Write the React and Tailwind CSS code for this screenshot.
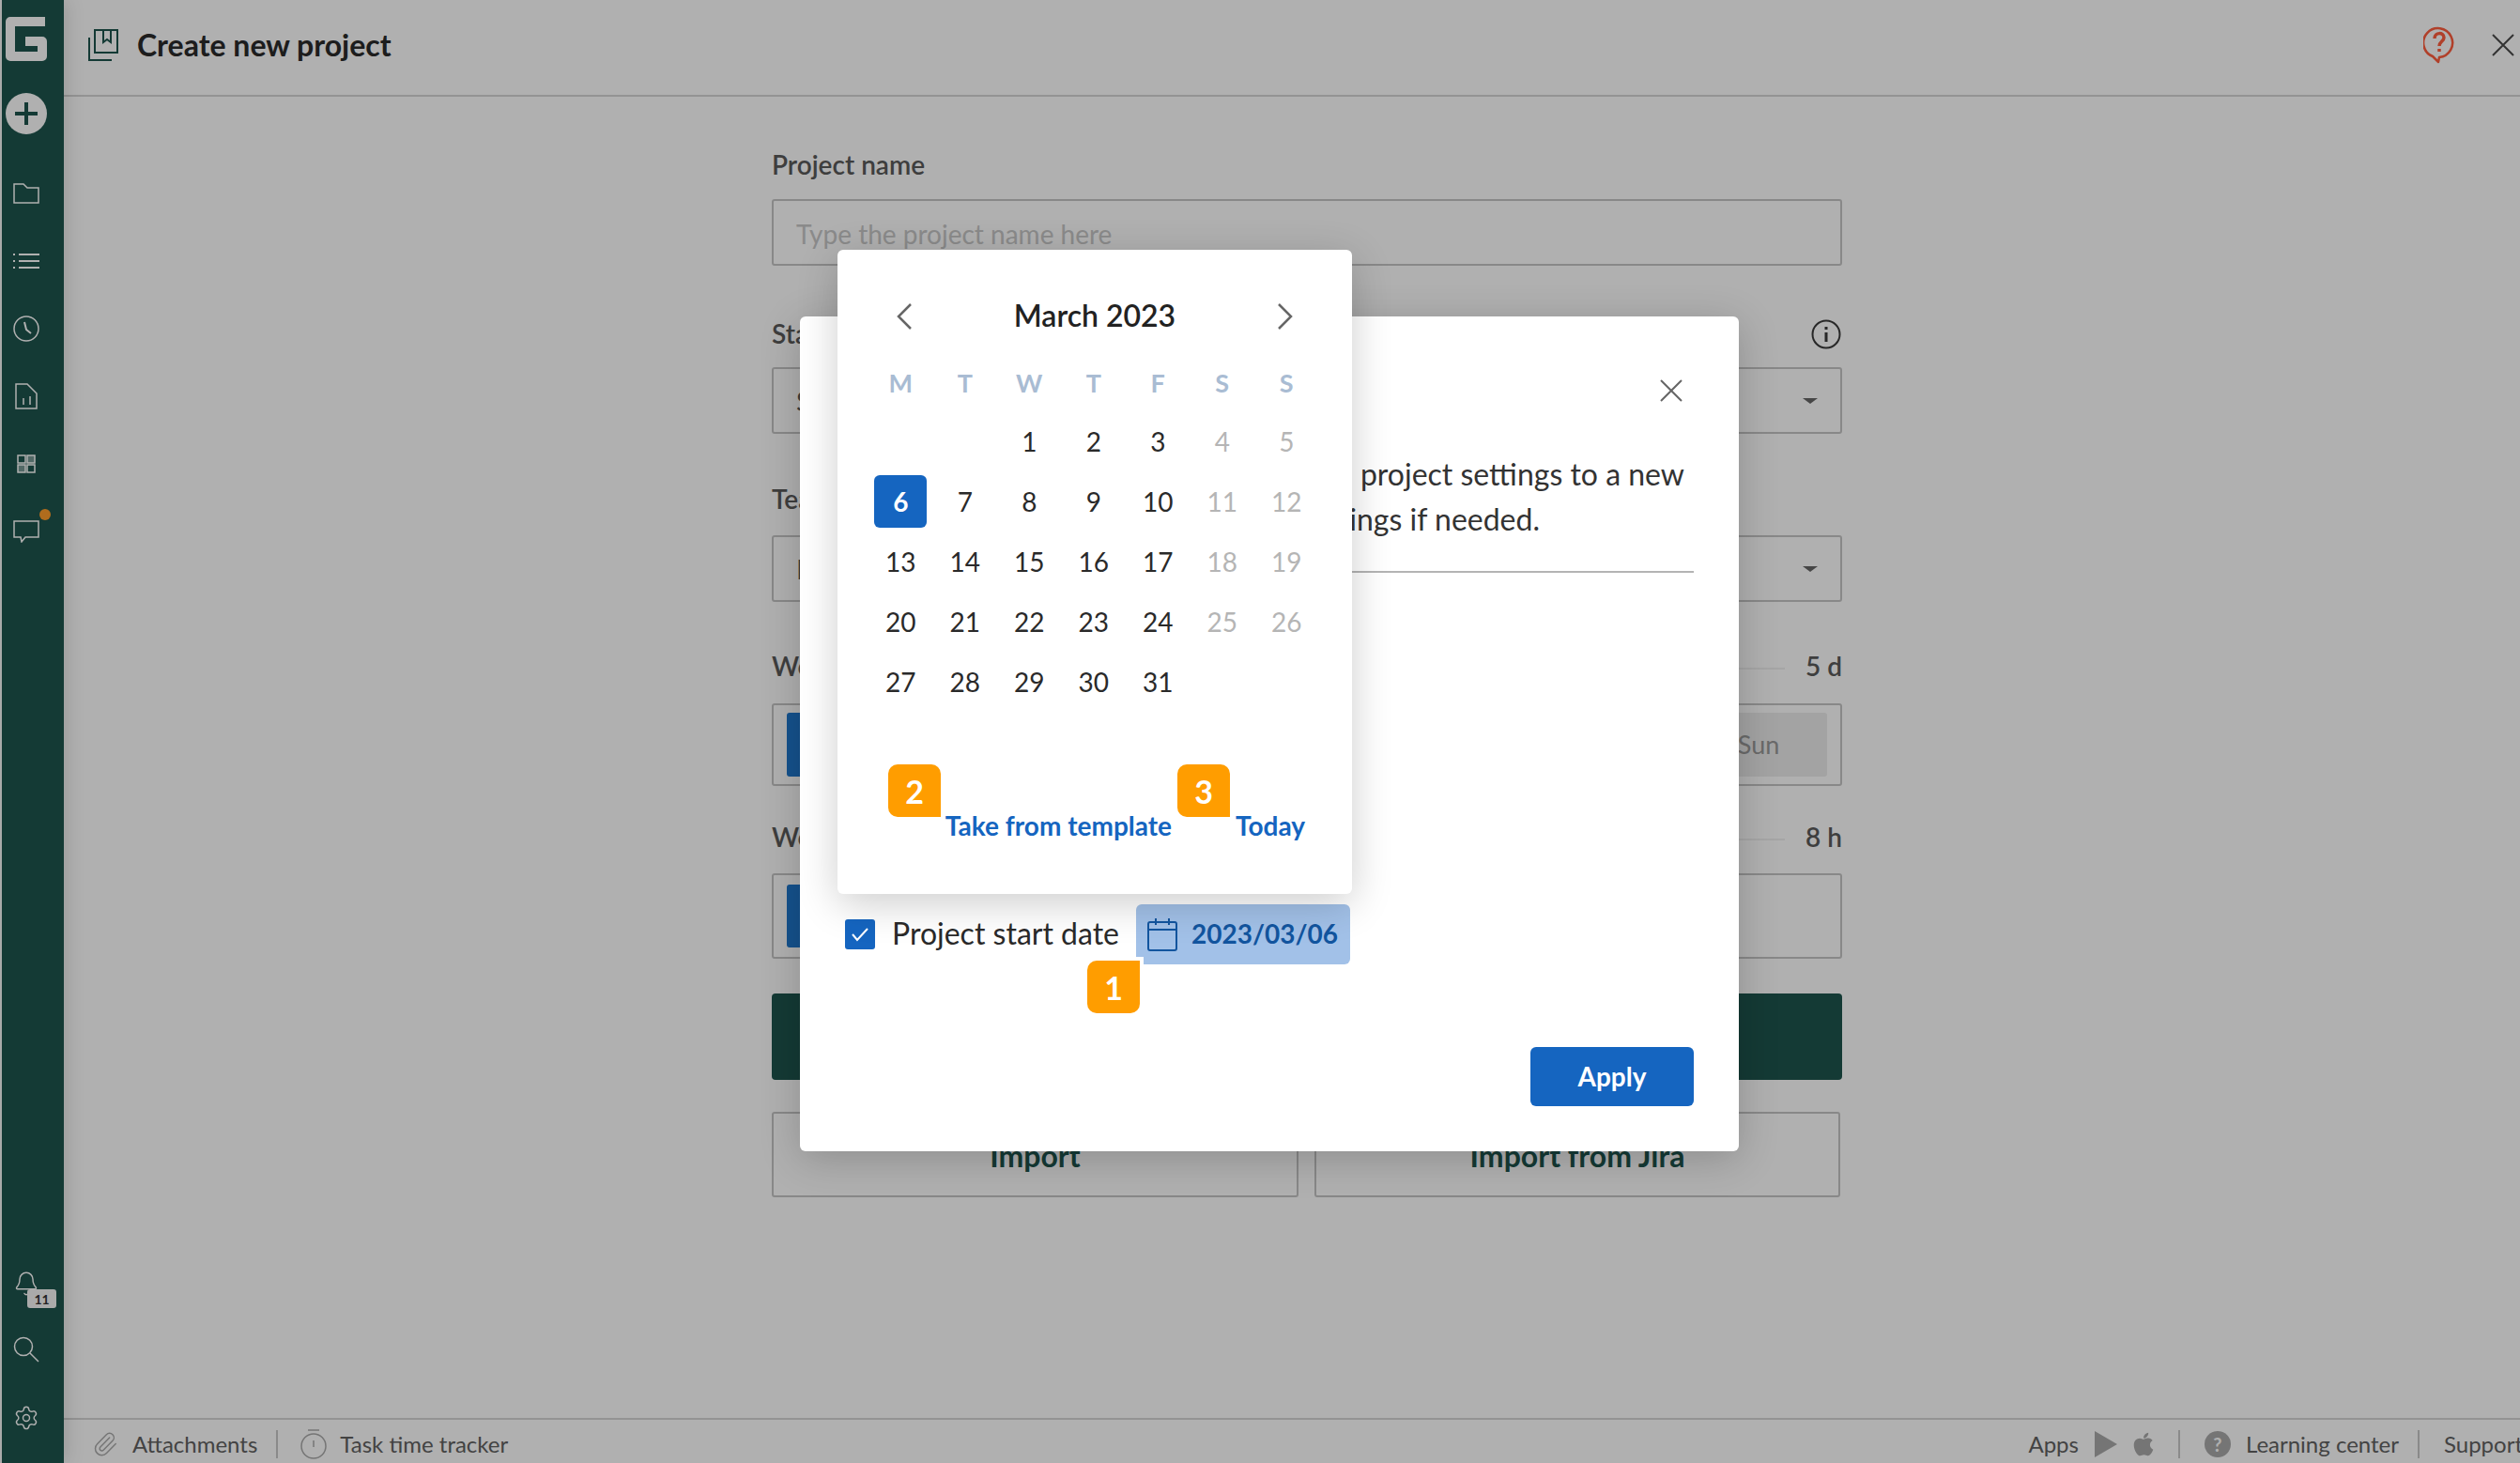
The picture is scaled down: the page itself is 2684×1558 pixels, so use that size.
import { Bell, Settings, Paperclip } from "lucide-react";
import { FaApple } from "react-icons/fa";

const WEEKDAYS = ["M", "T", "W", "T", "F", "S", "S"];
// null = empty cell before the 1st
const DAYS = [null, null, 1, 2, 3, 4, 5, 6, 7, 8, 9, 10, 11, 12, 13, 14, 15, 16, 17, 18, 19, 20, 21, 22, 23, 24, 25, 26, 27, 28, 29, 30, 31];

function Badge({ n, className }) {
  return (
    <div className={`absolute flex h-[56px] w-[56px] items-center justify-center bg-[#ff9d00] text-[34px] font-bold text-white ${className}`}>
      {n}
    </div>
  );
}

function SideIcon({ children }) {
  return <div className="relative flex h-[28px] w-[28px] items-center justify-center text-white">{children}</div>;
}

function Sidebar() {
  return (
    <aside className="z-10 ml-[2px] flex w-[66px] shrink-0 flex-col items-center bg-[#1d544d] pt-[18px] pb-[34px] pr-[14px] shadow-[4px_0_18px_rgba(0,0,0,0.12)]">
      <svg width="44" height="47" viewBox="0 0 44 47" fill="none" stroke="white" strokeWidth="10" strokeLinejoin="round" className="shrink-0">
        <path d="M42 5 H5 V42 H39 V26 H21" />
      </svg>
      <div className="mt-[34px] flex h-[44px] w-[44px] items-center justify-center rounded-full bg-white">
        <svg width="26" height="26" viewBox="0 0 26 26" stroke="#1d544d" strokeWidth="4"><path d="M13 1v24M1 13h24" /></svg>
      </div>
      <div className="mt-[49px] flex flex-col gap-[44px]">
        <SideIcon>
          <svg width="28" height="24" viewBox="0 0 28 24" fill="none" stroke="currentColor" strokeWidth="1.5">
            <path d="M1 2h10l4 4h12v16H1z" />
          </svg>
        </SideIcon>
        <SideIcon>
          <svg width="28" height="18" viewBox="0 0 28 18" stroke="currentColor" strokeWidth="2">
            <path d="M0 2h2M0 9h2M0 16h2M6 2h22M6 9h22M6 16h22" />
          </svg>
        </SideIcon>
        <SideIcon>
          <svg width="28" height="28" viewBox="0 0 28 28" fill="none" stroke="currentColor" strokeWidth="1.5">
            <circle cx="14" cy="14" r="13" />
            <path d="M12 7l2 8 5 4" strokeWidth="2" />
          </svg>
        </SideIcon>
        <SideIcon>
          <svg width="24" height="28" viewBox="0 0 24 28" fill="none" stroke="currentColor" strokeWidth="1.5">
            <path d="M1 1h12l10 10v16H1z" />
            <path d="M9 16v7M16 14v9" />
          </svg>
        </SideIcon>
        <SideIcon>
          <svg width="20" height="20" viewBox="0 0 20 20" fill="none" stroke="currentColor" strokeWidth="1.5">
            <rect x="1" y="1" width="8" height="8" />
            <rect x="11" y="1" width="8" height="8" fill="currentColor" fillOpacity="0.4" />
            <rect x="1" y="11" width="8" height="8" fill="currentColor" fillOpacity="0.4" />
            <rect x="11" y="11" width="8" height="8" />
          </svg>
        </SideIcon>
        <SideIcon>
          <svg width="28" height="24" viewBox="0 0 28 24" fill="none" stroke="currentColor" strokeWidth="1.5">
            <path d="M1 1h26v17H13l-4 5-1-5H1z" />
          </svg>
          <span className="absolute left-[28px] top-[-10px] h-[12px] w-[12px] rounded-full bg-[#ff9d2b]" />
        </SideIcon>
      </div>
      <div className="mt-auto flex flex-col gap-[45px]">
        <SideIcon>
          <Bell size={28} strokeWidth={1.25} className="mt-[6px]" />
          <span className="absolute left-[15px] top-[23px] flex h-[20px] w-[31px] items-center justify-center rounded-[3px] bg-[#f6f6f6] text-[14px] font-bold text-[#333]">11</span>
        </SideIcon>
        <SideIcon>
          <svg width="28" height="28" viewBox="0 0 28 28" fill="none" stroke="currentColor" strokeWidth="1.5">
            <circle cx="11" cy="11" r="9.5" />
            <path d="M18 18l9 9" />
          </svg>
        </SideIcon>
        <SideIcon>
          <Settings size={30} strokeWidth={1.25} />
        </SideIcon>
      </div>
    </aside>
  );
}

function Field({ label, text, className }) {
  return (
    <div>
      <div className="flex h-[38px] items-center text-[28px] font-semibold text-[#5a5a5a]">{label}</div>
      <div className={`flex h-[71px] items-center justify-between rounded-[3px] border-2 border-[#c6c6c6] pl-[24px] pr-[24px] text-[29px] text-[#555] ${className}`}>
        <span>{text}</span>
        <span className="h-0 w-0 border-x-[8px] border-t-[6px] border-x-transparent border-t-[#666]" />
      </div>
    </div>
  );
}

function Form() {
  return (
    <div className="ml-[754px] w-[1140px]">
      <div className="box-content flex h-[38px] items-center pt-[53px] text-[28px] font-semibold text-[#5a5a5a]">Project name</div>
      <div className="mt-[18px] flex h-[71px] items-center rounded-[3px] border-2 border-[#c6c6c6] pl-[24px] pt-[2px] text-[28px] text-[#c8c8c8]">
        Type the project name here
      </div>
      <div className="relative mt-[53px]">
        <Field label="Start" text="Standard" className="mt-[17px]" />
        <svg className="absolute right-[1px] top-[4px]" width="32" height="32" viewBox="0 0 32 32" fill="none" stroke="#3a3a3a" strokeWidth="2">
          <circle cx="16" cy="16" r="14.5" />
          <path d="M16 14v10M16 8v3" strokeWidth="3" />
        </svg>
      </div>
      <div className="mt-[50px]">
        <Field label="Team" text="None" className="mt-[20px]" />
      </div>
      <div className="mt-[49px] flex h-[38px] items-center justify-between text-[28px] font-semibold text-[#5a5a5a]">
        <span>Work days</span>
        <span className="ml-auto mr-[22px] mt-[6px] h-[2px] w-[300px] bg-[#f0f0f0]" />
        <span>5 d</span>
      </div>
      <div className="mt-[21px] flex h-[88px] items-center justify-between rounded-[3px] border-2 border-[#c6c6c6] px-[14px]">
        <span className="h-[68px] w-[100px] rounded-[3px] bg-[#1f77cc]" />
        <span className="flex h-[68px] w-[146px] items-center justify-center rounded-[3px] bg-[#ececec] text-[27px] text-[#9a9a9a]">Sun</span>
      </div>
      <div className="mt-[35px] flex h-[38px] items-center justify-between text-[28px] font-semibold text-[#5a5a5a]">
        <span>Work hours</span>
        <span className="ml-auto mr-[22px] mt-[6px] h-[2px] w-[300px] bg-[#f0f0f0]" />
        <span>8 h</span>
      </div>
      <div className="mt-[20px] flex h-[91px] items-center rounded-[3px] border-2 border-[#c6c6c6] px-[14px]">
        <span className="h-[67px] w-[100px] rounded-[3px] bg-[#1f77cc]" />
      </div>
      <div className="mt-[37px] h-[92px] rounded-[4px] bg-[#1d544d]" />
      <div className="mt-[34px] flex gap-[17px] pr-[2px]">
        <div className="flex h-[91px] w-[561px] items-center justify-center rounded-[3px] border-2 border-[#c6c6c6] pt-[2px] text-[32px] font-bold text-[#1d544d]">Import</div>
        <div className="flex h-[91px] flex-1 items-center justify-center rounded-[3px] border-2 border-[#c6c6c6] pt-[2px] text-[32px] font-bold text-[#1d544d]">Import from Jira</div>
      </div>
    </div>
  );
}

function Calendar() {
  return (
    <div className="absolute left-[40px] top-[-71px] h-[686px] w-[548px] rounded-[6px] bg-white pt-[40px] shadow-[0_10px_44px_rgba(0,0,0,0.2)]">
      <div className="flex h-[60px] items-center justify-between px-[63px]">
        <svg width="16" height="28" viewBox="0 0 16 28" fill="none" stroke="#666" strokeWidth="2.5" className="mt-[2px]"><path d="M15 1L2 14l13 13" /></svg>
        <span className="text-[32px] font-semibold text-[#222]">March 2023</span>
        <svg width="16" height="28" viewBox="0 0 16 28" fill="none" stroke="#666" strokeWidth="2.5" className="mt-[2px]"><path d="M1 1l13 13L1 27" /></svg>
      </div>
      <div className="mt-[12px] grid grid-cols-[repeat(7,68.5px)] px-[33px]">
        {WEEKDAYS.map((d, i) => (
          <div key={i} className="flex h-[60px] items-center justify-center text-[27px] font-bold text-[#a9bcd3]">{d}</div>
        ))}
        {DAYS.map((d, i) => {
          const weekend = i % 7 >= 5;
          return (
            <div key={i} className="flex h-[64px] items-center justify-center">
              {d === 6 ? (
                <span className="flex h-[56px] w-[56px] items-center justify-center rounded-[6px] bg-[#1565c0] text-[28px] font-bold text-white">6</span>
              ) : (
                <span className={`text-[28px] ${weekend ? "text-[#b5b5b5]" : "text-[#2a2a2a]"}`}>{d}</span>
              )}
            </div>
          );
        })}
      </div>
      <div className="mt-[101px] flex h-[40px] items-center justify-end gap-[68px] pr-[50px] text-[28px] font-bold text-[#1565c0]">
        <span>Take from template</span>
        <span>Today</span>
      </div>
      <Badge n="2" className="left-[54px] top-[548px] rounded-[10px] rounded-br-none" />
      <Badge n="3" className="left-[362px] top-[548px] rounded-[10px] rounded-br-none" />
    </div>
  );
}

function Dialog() {
  return (
    <div className="absolute left-[852px] top-[337px] z-30 h-[889px] w-[1000px] rounded-[6px] bg-white px-[48px] pt-[67px] shadow-[0_8px_44px_rgba(0,0,0,0.2)]">
      <div className="flex justify-end pr-[12px]">
        <svg width="24" height="24" viewBox="0 0 24 24" stroke="#666" strokeWidth="2"><path d="M1 1l22 22M23 1L1 23" /></svg>
      </div>
      <div className="mt-[53px] text-[32px] leading-[48px] text-[#333]">
        <p className="pr-[10px] text-right">project settings to a new</p>
        <p className="pr-[164px] text-right">settings if needed.</p>
      </div>
      <div className="mt-[31px] h-[2px] bg-[#b4b4b4]" />
      <div className="relative mt-[353px] flex h-[64px] items-center">
        <span className="flex h-[32px] w-[32px] items-center justify-center rounded-[3px] bg-[#1565c0]">
          <svg width="20" height="16" viewBox="0 0 20 16" fill="none" stroke="white" strokeWidth="2"><path d="M2 8l5 6L18 2" /></svg>
        </span>
        <span className="ml-[18px] w-[260px] pb-[2px] text-[32px] text-[#2a2a2a]">Project start date</span>
        <div className="flex h-[64px] w-[228px] items-center rounded-[6px] bg-[#a2c1e8] pl-[12px] text-[#12559f]">
          <svg width="32" height="36" viewBox="0 0 32 36" fill="none" stroke="currentColor" strokeWidth="2">
            <rect x="1" y="5" width="30" height="30" rx="2" />
            <path d="M1 13h30M9 1v7M23 1v7" />
          </svg>
          <span className="ml-[15px] pb-[2px] text-[28px] font-bold">2023/03/06</span>
        </div>
        <Badge n="1" className="left-[258px] top-[60px] rounded-[10px] rounded-tr-none shadow-[4px_-4px_0_white]" />
      </div>
      <div className="mt-[88px] flex justify-end">
        <div className="flex h-[63px] w-[174px] items-center justify-center rounded-[6px] bg-[#1565c0] pb-[2px] text-[28px] font-bold text-white">Apply</div>
      </div>
      <Calendar />
    </div>
  );
}

export default function App() {
  return (
    <div className="relative flex h-[1558px] w-[2684px] overflow-hidden bg-white font-['Lato',sans-serif]">
      <Sidebar />
      <main className="flex flex-1 flex-col">
        <header className="flex h-[103px] shrink-0 items-center border-b-2 border-[#d5d5d5] pb-[5px] pl-[26px] pr-[6px]">
          <svg width="32" height="34" viewBox="0 0 32 34" fill="none" stroke="#1d544d" strokeWidth="2">
            <path d="M7 1h24v24H7z" />
            <path d="M1 9v24h24" />
            <path d="M16 1v13l4-3 4 3V1" />
          </svg>
          <h1 className="ml-[20px] text-[32px] font-bold text-[#2a2a2a]">Create new project</h1>
          <div className="ml-auto flex items-center gap-[39px]">
            <svg width="34" height="40" viewBox="0 0 34 40" fill="none" stroke="#ff5d3d" strokeWidth="2.5">
              <path d="M17 33l-1 5-6-6A15.5 15.5 0 1 1 17 33z" strokeLinejoin="round" />
              <path d="M12 13c0-7 10-7 10-1 0 4-5 4-5 9M17 24v3" strokeWidth="3.5" />
            </svg>
            <svg width="24" height="24" viewBox="0 0 24 24" stroke="#4a4a4a" strokeWidth="2"><path d="M1 1l22 22M23 1L1 23" /></svg>
          </div>
        </header>
        <div className="flex-1">
          <Form />
        </div>
        <footer className="flex h-[48px] shrink-0 items-center border-t-2 border-[#d5d5d5] pl-[30px] pt-[6px] text-[24px] text-[#626262]">
          <Paperclip size={28} strokeWidth={1.25} className="text-[#aaa]" />
          <span className="ml-[15px]">Attachments</span>
          <span className="mx-[20px] h-[30px] w-[2px] bg-[#c8c8c8]" />
          <svg className="ml-[4px]" width="28" height="32" viewBox="0 0 28 32" fill="none" stroke="#aaa" strokeWidth="1.5">
            <circle cx="14" cy="18" r="13" />
            <path d="M8 1h12M14 12v7" />
          </svg>
          <span className="ml-[14px]">Task time tracker</span>
          <div className="ml-auto mr-[-3px] flex items-center">
            <span>Apps</span>
            <svg className="ml-[17px]" width="24" height="28" viewBox="0 0 24 28" fill="#aaa"><path d="M0 0l24 14L0 28z" /></svg>
            <FaApple size={28} color="#aaa" className="ml-[14px]" />
            <span className="ml-[23px] mr-[26px] h-[30px] w-[2px] bg-[#c8c8c8]" />
            <span className="flex h-[28px] w-[28px] items-center justify-center rounded-full bg-[#aaa] text-[20px] font-bold text-white">?</span>
            <span className="ml-[16px]">Learning center</span>
            <span className="mx-[20px] h-[30px] w-[2px] bg-[#c8c8c8]" />
            <span className="ml-[6px]">Support</span>
          </div>
        </footer>
      </main>
      <div className="absolute inset-0 z-20 bg-black/[0.31]" />
      <Dialog />
    </div>
  );
}
